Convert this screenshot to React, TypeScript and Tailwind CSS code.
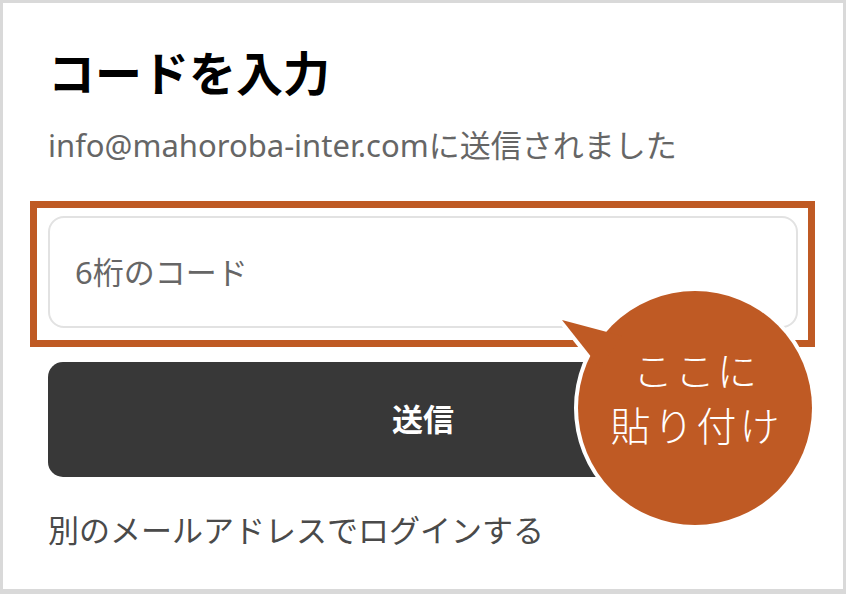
import React from "react";

const font = { fontFamily: '"Noto Sans", "Noto Sans CJK JP", sans-serif' };

export default function App() {
  return (
    <div
      className="relative w-[846px] h-[594px] bg-[#d9d9d9] pt-[3px] pl-[3px] pr-[3px] pb-[5px]"
      style={font}
    >
      <div className="w-full h-full bg-white flex flex-col px-[45px]">
        <div className="mt-[47px] h-[47px] flex items-center text-[47px] leading-none font-bold text-black">
          コードを入力
        </div>
        <div className="mt-[28px] h-[40px] flex items-center text-[31px] leading-none text-[#666666]">
          info@mahoroba-inter.comに送信されました
        </div>
        <div className="relative mt-[51px] h-[112px]">
          <input
            className="w-full h-full rounded-[16px] border-2 border-[#e2e2e2] bg-white pl-[25px] text-[31px] text-[#333] placeholder:text-[#666666] outline-none"
            placeholder="6桁のコード"
            style={font}
          />
          <div className="pointer-events-none absolute left-[-18px] top-[-15px] right-[-17px] bottom-[-19px] border-[7px] border-[#bf5a24]" />
        </div>
        <button className="mt-[34px] h-[115px] w-full rounded-[15px] bg-[#383838] text-white text-[31px] font-bold flex items-center justify-center">
          送信
        </button>
        <div className="mt-[33px] h-[40px] flex items-center text-[31px] leading-none text-[#4a4a4a]">
          別のメールアドレスでログインする
        </div>
      </div>

      <svg
        className="absolute left-0 top-0 pointer-events-none"
        width="846"
        height="594"
        viewBox="0 0 846 594"
      >
        <polygon
          points="562,320 616,331 592,358"
          fill="white"
          stroke="white"
          strokeWidth="8"
          strokeLinejoin="miter"
        />
        <circle cx="695" cy="408" r="117" fill="white" stroke="white" strokeWidth="8" />
        <circle cx="695" cy="408" r="117" fill="#bf5a24" />
        <polygon points="562,320 622,336 600,368" fill="#bf5a24" />
      </svg>

      <div
        className="absolute left-[580px] top-[342px] w-[230px] flex flex-col items-center text-white text-[40px] leading-[55px] font-light"
        style={{ fontFamily: '"Noto Sans CJK JP", sans-serif' }}
      >
        <div className="tracking-[2px] pl-[2px]">ここに</div>
        <div className="tracking-[3px] pl-[3px]">貼り付け</div>
      </div>
    </div>
  );
}
